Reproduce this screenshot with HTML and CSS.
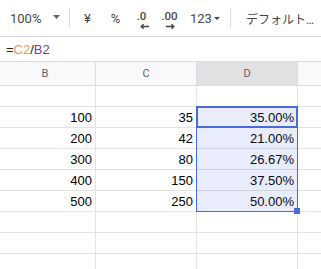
FILE: index.html
```html
<!DOCTYPE html>
<html lang="ja">
<head>
<meta charset="utf-8">
<link rel="stylesheet" href="styles.css">
</head>
<body>
<div class="toolbar">
  <span class="zoom">100%</span>
  <svg class="caret" width="7" height="4" viewBox="0 0 7 4"><path d="M0 0 L7 0 L3.5 4 Z" fill="#5f6368"/></svg>
  <span class="sep"></span>
  <span class="btn yen">¥</span>
  <span class="btn pct">%</span>
  <span class="btn dec"><span class="dtext">.0</span><svg class="arrow" width="9" height="5" viewBox="0 0 9 5"><path d="M1.2 2.5 H9 M3.6 0.2 L1.2 2.5 L3.6 4.8" fill="none" stroke="#444746" stroke-width="1.4"/></svg></span>
  <span class="btn inc"><span class="dtext">.00</span><svg class="arrow" width="9" height="5" viewBox="0 0 9 5"><path d="M0 2.5 H7.8 M5.4 0.2 L7.8 2.5 L5.4 4.8" fill="none" stroke="#444746" stroke-width="1.4"/></svg></span>
  <span class="fmt">123<svg class="caret small" width="6" height="3" viewBox="0 0 6 3"><path d="M0 0 L6 0 L3 3 Z" fill="#444746"/></svg></span>
  <span class="sep sep2"></span>
  <span class="font">デフォルト…</span>
</div>
<div class="formula"><span class="eq">=</span><span class="r1">C2</span><span class="eq">/</span><span class="r2">B2</span></div>
<div class="grid">
  <div class="hd">B</div><div class="hd">C</div><div class="hd hd-sel">D</div><div class="hd last"></div>
  <div class="c"></div><div class="c"></div><div class="c"></div><div class="c last"></div>
  <div class="c">100</div><div class="c">35</div><div class="c">35.00%</div><div class="c last"></div>
  <div class="c">200</div><div class="c">42</div><div class="c">21.00%</div><div class="c last"></div>
  <div class="c">300</div><div class="c">80</div><div class="c">26.67%</div><div class="c last"></div>
  <div class="c">400</div><div class="c">150</div><div class="c">37.50%</div><div class="c last"></div>
  <div class="c">500</div><div class="c">250</div><div class="c">50.00%</div><div class="c last"></div>
  <div class="c"></div><div class="c"></div><div class="c"></div><div class="c last"></div>
  <div class="c"></div><div class="c"></div><div class="c"></div><div class="c last"></div>
  <div class="c"></div><div class="c"></div><div class="c"></div><div class="c last"></div>
  <div class="sel"></div>
  <div class="active"></div>
  <div class="handle"></div>
</div>
</body>
</html>
```
FILE: styles.css
```css
* { box-sizing: border-box; }
html, body { margin: 0; padding: 0; }
body {
  width: 321px;
  height: 269px;
  overflow: hidden;
  background: #fff;
  font-family: "Liberation Sans", Arial, sans-serif;
}
.toolbar {
  height: 37px;
  border-bottom: 1px solid #dadce0;
  display: flex;
  align-items: center;
  padding-left: 10px;
  font-family: Roboto, "Noto Sans CJK JP", sans-serif;
  font-size: 13px;
  color: #444746;
  white-space: nowrap;
  overflow: hidden;
}
.zoom { width: 31px; flex: none; }
.caret { margin-left: 12px; margin-top: -2px; flex: none; }
.sep { width: 1px; height: 20px; background: #dadce0; margin-left: 9px; flex: none; }
.btn { width: 21px; text-align: center; flex: none; }
.yen { margin-left: 7px; }
.pct { margin-left: 7px; }
.dec, .inc {
  display: flex;
  flex-direction: column;
  align-items: center;
  font-size: 11.5px;
  font-weight: 500;
  line-height: 11px;
  padding-top: 3px;
}
.dec { margin-left: 5px; }
.inc { margin-left: 7px; }
.arrow { display: block; margin-top: 2px; }
.dec .arrow { margin-left: 6px; }
.inc .arrow { margin-left: 1px; }
.fmt { margin-left: 10px; display: flex; align-items: center; flex: none; }
.fmt .small { margin-left: 2px; margin-top: 1px; }
.sep2 { margin-left: 10px; }
.font { margin-left: 15px; font-size: 12px; font-family: Roboto, "Noto Sans CJK JP", sans-serif; }
.formula {
  height: 25px;
  border-bottom: 1px solid #dadce0;
  padding-left: 6px;
  padding-top: 1px;
  font-size: 13px;
  line-height: 23px;
  color: #222;
}
.r1 { color: #ea9a50; }
.r2 { color: #7b3e8e; }
.grid {
  position: relative;
  margin-left: -5px;
  display: grid;
  grid-template-columns: 101px 101px 101px 1fr;
  grid-template-rows: 24px;
  grid-auto-rows: 21px;
}
.hd {
  background: #f8f9fa;
  border-right: 1px solid #dadce0;
  border-bottom: 1px solid #dadce0;
  font-family: Roboto, sans-serif;
  font-size: 11px;
  color: #5f6368;
  text-align: center;
  line-height: 23px;
}
.hd-sel { background: #e1e1e1; }
.c {
  border-right: 1px solid #e2e3e3;
  border-bottom: 1px solid #e2e3e3;
  font-size: 13px;
  color: #000;
  text-align: right;
  padding-right: 3px;
  padding-top: 1px;
  line-height: 19px;
}
.last { border-right: none; }
.sel {
  position: absolute;
  left: 201px;
  top: 44px;
  width: 102px;
  height: 106px;
  border: 1px solid #4a6cd4;
  background: rgba(70, 95, 215, 0.12);
}
.active {
  position: absolute;
  left: 201px;
  top: 44px;
  width: 102px;
  height: 22px;
  border: 2px solid #4a6cd4;
}
.handle {
  position: absolute;
  left: 299px;
  top: 146px;
  width: 6px;
  height: 6px;
  background: #4a6cd4;
}
```
